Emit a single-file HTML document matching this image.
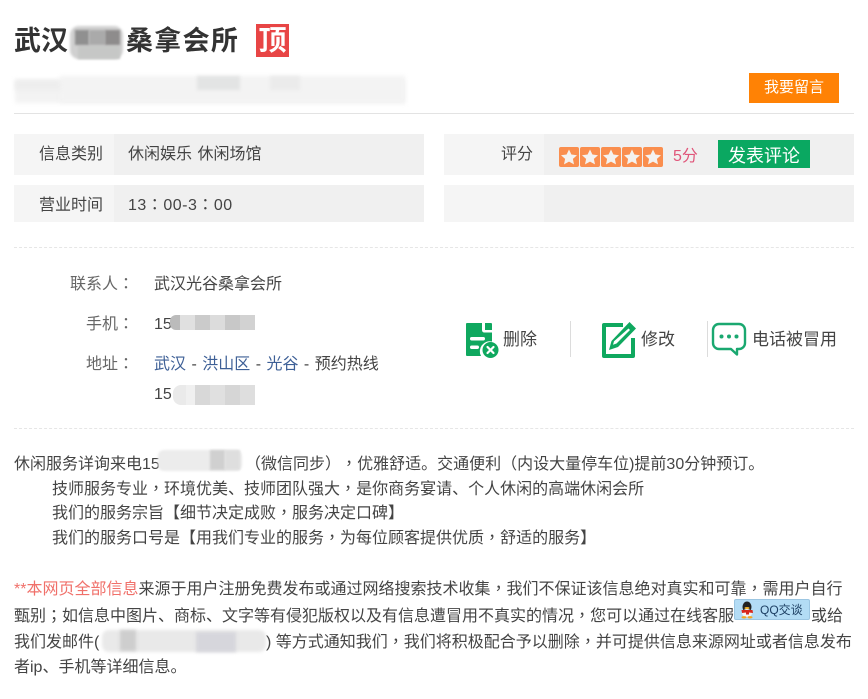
<!DOCTYPE html>
<html lang="zh-Hans">
<head>
<meta charset="utf-8">
<style>
html,body{margin:0;padding:0;background:#fff}
#p{position:relative;width:868px;height:699px;overflow:hidden;background:#fff;font-family:"Liberation Sans","Noto Sans CJK SC",sans-serif;font-size:16px;color:#444;text-spacing-trim:space-all}
.t{position:absolute;white-space:nowrap;line-height:24px;height:24px}
.b{position:absolute}
.g{color:#666}
a{color:#3d5f96;text-decoration:none}
b{font-weight:normal;font-family:"Noto Sans CJK TC",sans-serif;line-height:0}
.m{position:absolute;overflow:hidden}
.m i{position:absolute;top:0;bottom:0;display:block}
</style>
</head>
<body>
<div id="p">

<!-- title -->
<div class="t" style="left:14px;top:24px;height:34px;line-height:34px;font-size:27px;font-weight:bold;color:#333">武汉</div>
<div class="t" style="left:126px;top:24px;height:34px;line-height:34px;font-size:27px;font-weight:bold;color:#333;letter-spacing:1.300px">桑拿会所</div>
<div class="b" style="left:70px;top:26px;width:53px;height:33px;background:#d0d0d0;border-radius:9px;filter:blur(1.200px)"></div>
<div class="b" style="left:78px;top:46px;width:42px;height:13px;background:#c6c7c6;filter:blur(1px)"></div>
<div class="b" style="left:75px;top:30px;width:14px;height:15px;background:#909090;filter:blur(1px)"></div>
<div class="b" style="left:89px;top:30px;width:16px;height:15px;background:#aaa;filter:blur(1px)"></div>
<div class="b" style="left:105px;top:30px;width:15px;height:15px;background:#8e8c8c;filter:blur(1px)"></div>
<div class="b" style="left:256px;top:24px;width:33px;height:33px;background:#e84545"></div>
<div class="t" style="left:256px;top:24px;width:33px;height:33px;line-height:34px;text-align:center;font-size:28px;font-weight:bold;color:#fff">顶</div>

<!-- blurred subtitle -->
<div class="b" style="left:15px;top:80px;width:390px;height:23px;background:#f3f3f3;filter:blur(2px)"></div>
<div class="b" style="left:60px;top:76px;width:345px;height:27px;background:#f3f3f3;filter:blur(2px)"></div>
<div class="b" style="left:15px;top:80px;width:45px;height:10px;background:#ededed;filter:blur(2px)"></div>
<div class="b" style="left:197px;top:76px;width:43px;height:14px;background:#e3e4e4;filter:blur(1.500px)"></div>
<div class="b" style="left:270px;top:76px;width:30px;height:14px;background:#ebebeb;filter:blur(1.500px)"></div>

<div class="b" style="left:14px;top:113px;width:840px;height:1px;background:#e3e3e3"></div>

<!-- message btn -->
<div class="b" style="left:749px;top:73px;width:90px;height:30px;background:#ff8205"></div>
<div class="t" style="left:749px;top:76px;width:90px;text-align:center;font-size:15px;color:#fff">我要留言</div>

<!-- info rows -->
<div class="b" style="left:14px;top:134px;width:410px;height:41px;background:#f0f0f0"></div>
<div class="b" style="left:14px;top:134px;width:100px;height:41px;background:#f5f5f5"></div>
<div class="b" style="left:14px;top:185px;width:410px;height:37px;background:#f0f0f0"></div>
<div class="b" style="left:14px;top:185px;width:100px;height:37px;background:#f5f5f5"></div>
<div class="b" style="left:444px;top:134px;width:410px;height:41px;background:#f0f0f0"></div>
<div class="b" style="left:444px;top:134px;width:100px;height:41px;background:#f5f5f5"></div>
<div class="b" style="left:444px;top:185px;width:410px;height:37px;background:#f0f0f0"></div>
<div class="b" style="left:444px;top:185px;width:100px;height:37px;background:#f5f5f5"></div>

<div class="t" style="left:39px;top:143px">信息类别</div>
<div class="t" style="left:128px;top:143px;word-spacing:1px">休闲娱乐 休闲场馆</div>
<div class="t" style="left:39px;top:194px">营业时间</div>
<div class="t" style="left:128px;top:194px;letter-spacing:.5px">13<b lang="zh-TW">：</b>00-3<b lang="zh-TW">：</b>00</div>
<div class="t" style="left:501px;top:143px">评分</div>

<!-- stars -->
<svg class="b" style="left:559px;top:147px" width="105" height="21" viewBox="0 0 105 21">
<g fill="#fa8e4e"><rect x="0" y="0" width="20" height="20" rx="2"/><rect x="21" y="0" width="20" height="20" rx="2"/><rect x="42" y="0" width="20" height="20" rx="2"/><rect x="63" y="0" width="20" height="20" rx="2"/><rect x="84" y="0" width="20" height="20" rx="2"/></g>
<g fill="#f4f2f0">
<path d="M10 2.500l2.400 5 5.600.7-4.100 3.700 1.100 5.500-5-2.800-5 2.800 1.100-5.500-4.100-3.700 5.600-.7z"/>
<path transform="translate(21 0)" d="M10 2.500l2.400 5 5.600.7-4.100 3.700 1.100 5.500-5-2.800-5 2.800 1.100-5.500-4.100-3.700 5.600-.7z"/>
<path transform="translate(42 0)" d="M10 2.500l2.400 5 5.600.7-4.100 3.700 1.100 5.500-5-2.800-5 2.800 1.100-5.500-4.100-3.700 5.600-.7z"/>
<path transform="translate(63 0)" d="M10 2.500l2.400 5 5.600.7-4.100 3.700 1.100 5.500-5-2.800-5 2.800 1.100-5.500-4.100-3.700 5.600-.7z"/>
<path transform="translate(84 0)" d="M10 2.500l2.400 5 5.600.7-4.100 3.700 1.100 5.500-5-2.800-5 2.800 1.100-5.500-4.100-3.700 5.600-.7z"/>
</g>
</svg>
<div class="t" style="left:673px;top:145px;color:#e0567a">5分</div>
<div class="b" style="left:718px;top:140px;width:92px;height:28px;background:#0aa861"></div>
<div class="t" style="left:718px;top:144px;width:92px;text-align:center;font-size:18px;color:#fff">发表评论</div>

<!-- dashed -->
<div class="b" style="left:14px;top:247px;width:840px;border-top:1px dashed #e6e6e6"></div>
<div class="b" style="left:14px;top:428px;width:840px;border-top:1px dashed #e6e6e6"></div>

<!-- contact -->
<div class="t g" style="left:70px;top:273px">联系人<b lang="zh-TW">：</b></div>
<div class="t" style="left:154px;top:273px">武汉光谷桑拿会所</div>
<div class="t g" style="left:86px;top:313px">手机<b lang="zh-TW">：</b></div>
<div class="t" style="left:154px;top:313px">15</div>
<div class="m" style="left:170px;top:315px;width:85px;height:15px">
<i style="left:0;width:10px;background:#bbb;border-radius:6px 0 0 6px"></i><i style="left:10px;width:15px;background:#e0e0e0"></i><i style="left:25px;width:15px;background:#cbcbcb"></i><i style="left:40px;width:15px;background:#dcdcdc"></i><i style="left:55px;width:15px;background:#c8c8c8"></i><i style="left:70px;width:15px;background:#d2d2d2"></i>
</div>
<div class="t g" style="left:86px;top:353px">地址<b lang="zh-TW">：</b></div>
<div class="t" style="left:154px;top:353px;word-spacing:1px"><a>武汉</a> - <a>洪山区</a> - <a>光谷</a> - 预约热线</div>
<div class="t" style="left:154px;top:383px">15</div>
<div class="m" style="left:173px;top:385px;width:82px;height:20px">
<i style="left:0;width:13px;background:#eaeaea;border-radius:8px 0 0 8px"></i><i style="left:13px;width:15px;background:#f0f0f0"></i><i style="left:22px;width:15px;background:#d8d8d8"></i><i style="left:37px;width:15px;background:#e0e0e0"></i><i style="left:52px;width:15px;background:#d6d6d6"></i><i style="left:67px;width:15px;background:#dedede"></i>
</div>

<!-- actions -->
<svg class="b" style="left:466px;top:322px" width="34" height="36" viewBox="0 0 34 36">
<path fill="#0fa85f" d="M1 1h15v7c0 1.500 1 2.500 2.500 2.500H26v9a10 10 0 0 0-11 14.500H1a1 1 0 0 1-1-1V2a1 1 0 0 1 1-1z"/>
<path fill="#0fa85f" d="M19 1h6a1 1 0 0 1 1 1v6h-7z"/>
<rect x="4" y="15" width="15" height="3.500" rx="1.700" fill="#fff"/>
<rect x="4" y="23.500" width="9" height="3.500" rx="1.700" fill="#fff"/>
<circle cx="24.500" cy="28" r="8" fill="#0fa85f"/>
<path d="M21.500 25l6 6M27.500 25l-6 6" stroke="#fff" stroke-width="2.200" stroke-linecap="round"/>
</svg>
<div class="t" style="left:503px;top:328px;font-size:17px;height:24px">删除</div>
<div class="b" style="left:570px;top:321px;width:1px;height:36px;background:#dcdcdc"></div>

<svg class="b" style="left:601px;top:321px" width="36" height="37" viewBox="0 0 36 37">
<path fill="none" stroke="#0fa85f" stroke-width="4" stroke-linejoin="round" d="M22 4H3v31h29V17"/>
<path fill="#0fa85f" d="M28.500 1l6.500 6.500-18 18.500-9 3 2.500-9z"/>
<path fill="#fff" d="M27.500 7.500l1.500 1.500-13.500 13.500-3.500 1.200 1-3.500z"/>
</svg>
<div class="t" style="left:641px;top:328px;font-size:17px">修改</div>
<div class="b" style="left:707px;top:321px;width:1px;height:36px;background:#dcdcdc"></div>

<svg class="b" style="left:711px;top:322px" width="36" height="36" viewBox="0 0 36 36">
<path fill="none" stroke="#1aa870" stroke-width="2.400" stroke-linejoin="round" d="M8 2h20a6 6 0 0 1 6 6v13a6 6 0 0 1-6 6h-2v5.500L20 27H8a6 6 0 0 1-6-6V8a6 6 0 0 1 6-6z"/>
<circle cx="10.500" cy="14.500" r="2" fill="#1aa870"/><circle cx="18" cy="14.500" r="2" fill="#1aa870"/><circle cx="25.500" cy="14.500" r="2" fill="#1aa870"/>
</svg>
<div class="t" style="left:752px;top:328px;font-size:17px">电话被冒用</div>

<!-- body -->
<div class="t" style="left:14px;top:453px">休闲服务详询来电15</div>
<div class="b" style="left:158px;top:450px;width:84px;height:21px;background:#ececec;border-radius:6px;filter:blur(1px)"></div>
<div class="b" style="left:210px;top:450px;width:15px;height:20px;background:#d0d0d0;filter:blur(1px)"></div>
<div class="b" style="left:225px;top:450px;width:15px;height:20px;background:#dedede;filter:blur(1px)"></div>
<div class="t" style="left:245px;top:453px"><b lang="zh-TW">（</b>微信同步<b lang="zh-TW">）</b><b lang="zh-TW">，</b>优雅舒适。交通便利<b lang="zh-TW">（</b>内设大量停车位)提前30分钟预订。</div>
<div class="t" style="left:52px;top:478px">技师服务专业<b lang="zh-TW">，</b>环境优美、技师团队强大<b lang="zh-TW">，</b>是你商务宴请、个人休闲的高端休闲会所</div>
<div class="t" style="left:52px;top:502px">我们的服务宗旨【细节决定成败<b lang="zh-TW">，</b>服务决定口碑】</div>
<div class="t" style="left:52px;top:527px">我们的服务口号是【用我们专业的服务<b lang="zh-TW">，</b>为每位顾客提供优质<b lang="zh-TW">，</b>舒适的服务】</div>

<div class="t" style="left:14px;top:578px"><span style="color:#f0706a">**本网页全部信息</span>来源于用户注册免费发布或通过网络搜索技术收集<b lang="zh-TW">，</b>我们不保证该信息绝对真实和可靠<b lang="zh-TW">，</b>需用户自行</div>
<div class="t" style="left:14px;top:605px">甄别<b lang="zh-TW">；</b>如信息中图片、商标、文字等有侵犯版权以及有信息遭冒用不真实的情况<b lang="zh-TW">，</b>您可以通过在线客服</div>
<div class="t" style="left:811px;top:605px">或给</div>
<div class="t" style="left:14px;top:631px">我们发邮件(</div>
<div class="b" style="left:102px;top:630px;width:164px;height:22px;background:#e9e9e9;border-radius:7px;filter:blur(1.500px)"></div>
<div class="b" style="left:120px;top:630px;width:16px;height:21px;background:#cecece;filter:blur(1.500px)"></div>
<div class="b" style="left:196px;top:632px;width:40px;height:20px;background:#d6d6dc;filter:blur(1.500px)"></div>
<div class="t" style="left:266px;top:631px">) 等方式通知我们<b lang="zh-TW">，</b>我们将积极配合予以删除<b lang="zh-TW">，</b>并可提供信息来源网址或者信息发布</div>
<div class="t" style="left:14px;top:656px">者ip、手机等详细信息。</div>

<!-- QQ badge -->
<div class="b" style="left:734px;top:599px;width:76px;height:21px;background:#b3dcf5;border:1px solid #9cc6e2;box-sizing:border-box;border-radius:2px"></div>
<svg class="b" style="left:739px;top:601px" width="16" height="18" viewBox="0 0 16 18">
<ellipse cx="8" cy="6" rx="4.500" ry="5.500" fill="#222"/>
<ellipse cx="8" cy="12" rx="5" ry="4" fill="#f4f4f4"/>
<path d="M2.500 9h11l.5 3-4-.5 0 2-3 0 0-2-4 .5z" fill="#d8281c"/>
<ellipse cx="8" cy="7" rx="2.500" ry="1" fill="#f5b52a"/>
<ellipse cx="5" cy="16.300" rx="2.500" ry="1.200" fill="#f5a623"/>
<ellipse cx="11" cy="16.300" rx="2.500" ry="1.200" fill="#f5a623"/>
</svg>
<div class="t" style="left:760px;top:598px;font-size:12px;color:#1d3f63">QQ交谈</div>

</div>
</body>
</html>
